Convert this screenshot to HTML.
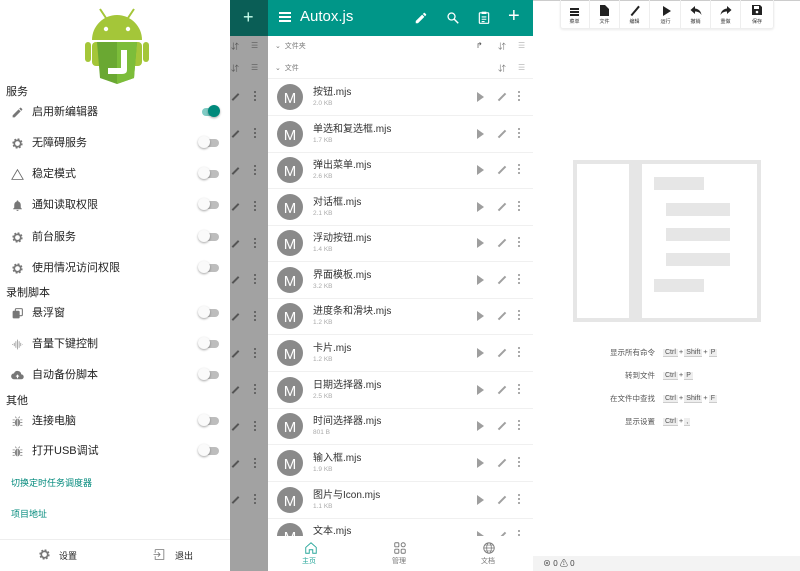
<!DOCTYPE html>
<html><head><meta charset="utf-8"><style>
*{margin:0;padding:0;box-sizing:border-box}
body{width:800px;height:571px;overflow:hidden;position:relative;background:#fff;font-family:"Liberation Sans","Noto Sans CJK SC",sans-serif;color:#222}
.a{position:absolute}
.dr{left:0;top:0;width:230px;height:571px;background:#fff}
.sec{position:absolute;left:6px;font-size:11px;color:#222}
.it{position:absolute;left:32px;font-size:11px;color:#222;line-height:14px}
.ic{position:absolute;left:11px;width:13px;height:13px}
.tg{position:absolute;left:198px;width:22px;height:10px}
.tg .tr{position:absolute;left:4px;top:1px;width:17px;height:8px;border-radius:4px;background:#bdbdbd}
.tg .th{position:absolute;left:0;top:-2px;width:12px;height:12px;border-radius:6px;background:#fafafa;box-shadow:0 1px 2px rgba(0,0,0,.35)}
.tg.on .tr{background:#80cbc4}
.tg.on .th{left:10px;background:#00897b}
.strip{left:230px;top:0;width:38px;height:571px;background:#a2a2a2}
.app{left:268px;top:0;width:265px;height:571px;background:#fff}
.hdr{left:268px;top:0;width:265px;height:36px;background:#009688}
.row{position:absolute;left:268px;width:265px;height:37px;border-bottom:1px solid #f0f0f0}
.av{position:absolute;left:9px;top:5px;width:26px;height:26px;border-radius:13px;background:#8a8a8a;color:#fff;font-family:"Liberation Sans",sans-serif;font-size:15px;text-align:center;line-height:29px}
.tt{position:absolute;left:45px;top:4px;font-size:10px;color:#333}
.sz{position:absolute;left:45px;top:21px;font-size:6.5px;color:#aaa}
.pl{position:absolute;left:209px;top:13px;width:0;height:0;border-left:7px solid #9e9e9e;border-top:5px solid transparent;border-bottom:5px solid transparent}
.pe{position:absolute;left:229px;top:17px;width:10px;height:2px;background:#a0a0a0;transform:rotate(-45deg)}
.dt{position:absolute;left:250px;top:12px;width:2px;height:2px;background:#aaa;box-shadow:0 4px 0 #aaa,0 8px 0 #aaa}
.spe{position:absolute;left:231px;width:9px;height:2px;background:#555;transform:rotate(-45deg)}
.sdt{position:absolute;left:254px;width:2px;height:2px;background:#666;box-shadow:0 4px 0 #666,0 8px 0 #666}
.ed{left:533px;top:0;width:267px;height:571px;background:#fff}
.tb{position:absolute;top:0;width:30px;height:29px;border-right:1px solid #eee;text-align:center}
.tb span{position:absolute;left:0;right:0;top:18px;font-size:5px;color:#333}
.gr{position:absolute;background:#e6e6e6}
.sc{position:absolute;font-size:7.5px;color:#555;white-space:nowrap}
.k{display:inline-block;background:#eee;border-bottom:1px solid #ccc;padding:0 2px;font-size:7px;margin:0 1px}
</style></head><body>

<div class="a dr">
 <svg class="a" style="left:84px;top:6px" width="66" height="78" viewBox="0 0 66 78">
  <line x1="16" y1="3" x2="22" y2="12" stroke="#a4c639" stroke-width="2"/>
  <line x1="50" y1="3" x2="44" y2="12" stroke="#a4c639" stroke-width="2"/>
  <path d="M8 34 A25 25 0 0 1 58 34 Z" fill="#a4c639"/>
  <circle cx="22" cy="23" r="2.2" fill="#fff"/><circle cx="44" cy="23" r="2.2" fill="#fff"/>
  <rect x="8" y="36" width="50" height="24" rx="4" fill="#a4c639"/>
  <rect x="1" y="36" width="6" height="20" rx="3" fill="#a4c639"/>
  <rect x="59" y="36" width="6" height="20" rx="3" fill="#a4c639"/>
  <path d="M13 36 H53 L50 72 L33 78 L16 72 Z" fill="#6aa832"/>
  <path d="M33 36 H53 L50 72 L33 78 Z" fill="#7cbd3a"/>
  <path d="M37 44 H43 V64 Q43 68 38 68 H24 V62 H37 Z" fill="#fff"/>
 </svg>
 <div class="sec" style="top:83px">服务</div>
 <svg class="ic" style="top:106px" viewBox="0 0 24 24"><path d="M3 17.2V21h3.8L17.8 10l-3.8-3.8zM20.7 7a1 1 0 000-1.4l-2.3-2.3a1 1 0 00-1.4 0l-1.8 1.8 3.8 3.8z" fill="#777"/></svg>
 <div class="it" style="top:105px">启用新编辑器</div><div class="tg on" style="top:107px"><div class="tr"></div><div class="th"></div></div>
 <svg class="ic" style="top:137px" viewBox="0 0 24 24"><circle cx="12" cy="12" r="7" fill="none" stroke="#777" stroke-width="5" stroke-dasharray="3 2.5"/><circle cx="12" cy="12" r="6" fill="none" stroke="#777" stroke-width="3"/></svg>
 <div class="it" style="top:136px">无障碍服务</div><div class="tg" style="top:138px"><div class="tr"></div><div class="th"></div></div>
 <svg class="ic" style="top:168px" viewBox="0 0 24 24"><path d="M12 3L1.5 21h21z" fill="none" stroke="#666" stroke-width="1.5"/></svg>
 <div class="it" style="top:167px">稳定模式</div><div class="tg" style="top:169px"><div class="tr"></div><div class="th"></div></div>
 <svg class="ic" style="top:199px" viewBox="0 0 24 24"><path d="M12 22a2 2 0 002-2h-4a2 2 0 002 2zm6-6V11c0-3-1.6-5.6-4.5-6.3V4a1.5 1.5 0 00-3 0v.7C7.6 5.4 6 8 6 11v5l-2 2v1h16v-1z" fill="#777"/></svg>
 <div class="it" style="top:198px">通知读取权限</div><div class="tg" style="top:200px"><div class="tr"></div><div class="th"></div></div>
 <svg class="ic" style="top:231px" viewBox="0 0 24 24"><circle cx="12" cy="12" r="7" fill="none" stroke="#777" stroke-width="5" stroke-dasharray="3 2.5"/><circle cx="12" cy="12" r="6" fill="none" stroke="#777" stroke-width="3"/></svg>
 <div class="it" style="top:230px">前台服务</div><div class="tg" style="top:232px"><div class="tr"></div><div class="th"></div></div>
 <svg class="ic" style="top:262px" viewBox="0 0 24 24"><circle cx="12" cy="12" r="7" fill="none" stroke="#777" stroke-width="5" stroke-dasharray="3 2.5"/><circle cx="12" cy="12" r="6" fill="none" stroke="#777" stroke-width="3"/></svg>
 <div class="it" style="top:261px">使用情况访问权限</div><div class="tg" style="top:263px"><div class="tr"></div><div class="th"></div></div>
 <div class="sec" style="top:284px">录制脚本</div>
 <svg class="ic" style="top:307px" viewBox="0 0 24 24"><rect x="3" y="7" width="13" height="14" rx="2" fill="#777"/><rect x="8" y="3" width="13" height="13" rx="2" fill="none" stroke="#777" stroke-width="2"/></svg>
 <div class="it" style="top:306px">悬浮窗</div><div class="tg" style="top:308px"><div class="tr"></div><div class="th"></div></div>
 <svg class="ic" style="top:338px" viewBox="0 0 24 24"><path d="M2 12h2M6 9v6M9 6v12M12 3v18M15 6v12M18 9v6M21 12h1" stroke="#999" stroke-width="1.5"/></svg>
 <div class="it" style="top:337px">音量下键控制</div><div class="tg" style="top:339px"><div class="tr"></div><div class="th"></div></div>
 <svg class="ic" style="top:369px" viewBox="0 0 24 24"><path d="M19 10a7 7 0 00-13.5-2A5.5 5.5 0 006 19h13a4.5 4.5 0 000-9z" fill="#777"/><path d="M12 10l-3.5 4H11v3h2v-3h2.5z" fill="#fff"/></svg>
 <div class="it" style="top:368px">自动备份脚本</div><div class="tg" style="top:370px"><div class="tr"></div><div class="th"></div></div>
 <div class="sec" style="top:392px">其他</div>
 <svg class="ic" style="top:415px" viewBox="0 0 24 24"><ellipse cx="12" cy="14" rx="5" ry="7" fill="#888"/><path d="M3 9h4M3 14h4M3 19h4M17 9h4M17 14h4M17 19h4M8 3l2 3M16 3l-2 3" stroke="#888" stroke-width="1.5"/><path d="M12 8v13" stroke="#fff"/></svg>
 <div class="it" style="top:414px">连接电脑</div><div class="tg" style="top:416px"><div class="tr"></div><div class="th"></div></div>
 <svg class="ic" style="top:445px" viewBox="0 0 24 24"><ellipse cx="12" cy="14" rx="5" ry="7" fill="#888"/><path d="M3 9h4M3 14h4M3 19h4M17 9h4M17 14h4M17 19h4M8 3l2 3M16 3l-2 3" stroke="#888" stroke-width="1.5"/><path d="M12 8v13" stroke="#fff"/></svg>
 <div class="it" style="top:444px">打开USB调试</div><div class="tg" style="top:446px"><div class="tr"></div><div class="th"></div></div>
 <div class="a" style="left:11px;top:476px;font-size:9px;color:#00897b">切换定时任务调度器</div>
 <div class="a" style="left:11px;top:507px;font-size:9px;color:#00897b">项目地址</div>
 <div class="a" style="left:0;top:539px;width:230px;height:1px;background:#eee"></div>
 <svg class="a" style="left:38px;top:548px" width="13" height="13" viewBox="0 0 24 24"><circle cx="12" cy="12" r="7" fill="none" stroke="#777" stroke-width="5" stroke-dasharray="3 2.5"/><circle cx="12" cy="12" r="6" fill="none" stroke="#777" stroke-width="3"/></svg>
 <div class="a" style="left:59px;top:549px;font-size:9px">设置</div>
 <svg class="a" style="left:153px;top:548px" width="13" height="13" viewBox="0 0 24 24"><path d="M4 3h16v18H4V15M4 9V3" fill="none" stroke="#777" stroke-width="1.5"/><path d="M1 12h12M9 8l4 4-4 4" fill="none" stroke="#777" stroke-width="1.5"/></svg>
 <div class="a" style="left:175px;top:549px;font-size:9px">退出</div>
</div>

<div class="a strip"></div>
<div class="a" style="left:230px;top:0;width:38px;height:36px;background:#0a5e56"></div>
<div class="a" style="left:243px;top:7px;color:#cfe;font-size:18px;font-weight:300">+</div>
<div class="a" style="left:231px;top:41px;font-size:8px;color:#555">⇵</div><div class="a" style="left:251px;top:41px;font-size:8px;color:#666">☰</div>
<div class="a" style="left:231px;top:63px;font-size:8px;color:#555">⇵</div><div class="a" style="left:251px;top:63px;font-size:8px;color:#666">☰</div>
<div class="spe" style="top:96px"></div><div class="sdt" style="top:91px"></div>
<div class="spe" style="top:133px"></div><div class="sdt" style="top:128px"></div>
<div class="spe" style="top:170px"></div><div class="sdt" style="top:165px"></div>
<div class="spe" style="top:206px"></div><div class="sdt" style="top:201px"></div>
<div class="spe" style="top:243px"></div><div class="sdt" style="top:238px"></div>
<div class="spe" style="top:279px"></div><div class="sdt" style="top:274px"></div>
<div class="spe" style="top:316px"></div><div class="sdt" style="top:311px"></div>
<div class="spe" style="top:353px"></div><div class="sdt" style="top:348px"></div>
<div class="spe" style="top:389px"></div><div class="sdt" style="top:384px"></div>
<div class="spe" style="top:426px"></div><div class="sdt" style="top:421px"></div>
<div class="spe" style="top:463px"></div><div class="sdt" style="top:458px"></div>
<div class="spe" style="top:499px"></div><div class="sdt" style="top:494px"></div>

<div class="a app"></div>
<div class="a hdr">
 <div class="a" style="left:11px;top:12px;width:12px;height:2px;background:#fff;box-shadow:0 4px 0 #fff,0 8px 0 #fff"></div>
 <div class="a" style="left:32px;top:8px;font-size:15px;color:#fff">Autox.js</div>
 <svg class="a" style="left:146px;top:11px" width="14" height="14" viewBox="0 0 24 24"><path d="M3 17.2V21h3.8L17.8 10l-3.8-3.8zM20.7 7a1 1 0 000-1.4l-2.3-2.3a1 1 0 00-1.4 0l-1.8 1.8 3.8 3.8z" fill="#fff"/></svg>
 <svg class="a" style="left:178px;top:11px" width="14" height="14" viewBox="0 0 24 24"><circle cx="9.5" cy="9.5" r="6" fill="none" stroke="#fff" stroke-width="2.2"/><path d="M14 14l7 7" stroke="#fff" stroke-width="2.5"/></svg>
 <svg class="a" style="left:209px;top:10px" width="14" height="15" viewBox="0 0 24 24"><rect x="4" y="4" width="16" height="18" rx="1" fill="none" stroke="#fff" stroke-width="2"/><rect x="8" y="2" width="8" height="4" fill="#fff"/><path d="M8 11h8M8 15h8M8 19h5" stroke="#fff" stroke-width="1.8"/></svg>
 <div class="a" style="left:240px;top:5px;font-size:20px;color:#fff;font-weight:300">+</div>
</div>
<div class="a" style="left:275px;top:41px;font-size:7px;color:#777">⌄ &nbsp;文件夹</div>
<div class="a" style="left:476px;top:41px;font-size:8px;color:#555">↱</div><div class="a" style="left:498px;top:41px;font-size:8px;color:#777">⇵</div><div class="a" style="left:518px;top:41px;font-size:8px;color:#bbb">☰</div>
<div class="a" style="left:275px;top:63px;font-size:7px;color:#777">⌄ &nbsp;文件</div>
<div class="a" style="left:498px;top:63px;font-size:8px;color:#777">⇵</div><div class="a" style="left:518px;top:63px;font-size:8px;color:#bbb">☰</div>
<div class="a" style="left:268px;top:78px;width:265px;height:1px;background:#f0f0f0"></div>

<div class="row" style="top:79px"><div class="av">M</div><div class="tt">按钮.mjs</div><div class="sz">2.0 KB</div><div class="pl"></div><div class="pe"></div><div class="dt"></div></div>
<div class="row" style="top:116px"><div class="av">M</div><div class="tt">单选和复选框.mjs</div><div class="sz">1.7 KB</div><div class="pl"></div><div class="pe"></div><div class="dt"></div></div>
<div class="row" style="top:152px"><div class="av">M</div><div class="tt">弹出菜单.mjs</div><div class="sz">2.6 KB</div><div class="pl"></div><div class="pe"></div><div class="dt"></div></div>
<div class="row" style="top:189px"><div class="av">M</div><div class="tt">对话框.mjs</div><div class="sz">2.1 KB</div><div class="pl"></div><div class="pe"></div><div class="dt"></div></div>
<div class="row" style="top:225px"><div class="av">M</div><div class="tt">浮动按钮.mjs</div><div class="sz">1.4 KB</div><div class="pl"></div><div class="pe"></div><div class="dt"></div></div>
<div class="row" style="top:262px"><div class="av">M</div><div class="tt">界面模板.mjs</div><div class="sz">3.2 KB</div><div class="pl"></div><div class="pe"></div><div class="dt"></div></div>
<div class="row" style="top:298px"><div class="av">M</div><div class="tt">进度条和滑块.mjs</div><div class="sz">1.2 KB</div><div class="pl"></div><div class="pe"></div><div class="dt"></div></div>
<div class="row" style="top:335px"><div class="av">M</div><div class="tt">卡片.mjs</div><div class="sz">1.2 KB</div><div class="pl"></div><div class="pe"></div><div class="dt"></div></div>
<div class="row" style="top:372px"><div class="av">M</div><div class="tt">日期选择器.mjs</div><div class="sz">2.5 KB</div><div class="pl"></div><div class="pe"></div><div class="dt"></div></div>
<div class="row" style="top:408px"><div class="av">M</div><div class="tt">时间选择器.mjs</div><div class="sz">801 B</div><div class="pl"></div><div class="pe"></div><div class="dt"></div></div>
<div class="row" style="top:445px"><div class="av">M</div><div class="tt">输入框.mjs</div><div class="sz">1.9 KB</div><div class="pl"></div><div class="pe"></div><div class="dt"></div></div>
<div class="row" style="top:482px"><div class="av">M</div><div class="tt">图片与Icon.mjs</div><div class="sz">1.1 KB</div><div class="pl"></div><div class="pe"></div><div class="dt"></div></div>
<div class="row" style="top:518px"><div class="av">M</div><div class="tt">文本.mjs</div><div class="pl"></div><div class="pe"></div><div class="dt"></div></div>

<div class="a" style="left:268px;top:536px;width:265px;height:35px;background:#fff"></div>
<svg class="a" style="left:304px;top:541px" width="14" height="14" viewBox="0 0 24 24"><path d="M3 11L12 3l9 8v10h-6v-6H9v6H3z" fill="none" stroke="#26a69a" stroke-width="1.6"/></svg>
<div class="a" style="left:302px;top:556px;font-size:7px;color:#26a69a">主页</div>
<svg class="a" style="left:393px;top:541px" width="14" height="14" viewBox="0 0 24 24"><rect x="3" y="3" width="7" height="7" rx="1.5" fill="none" stroke="#777" stroke-width="1.6"/><circle cx="17.5" cy="6.5" r="3.5" fill="none" stroke="#777" stroke-width="1.6"/><rect x="3" y="14" width="7" height="7" rx="1.5" fill="none" stroke="#777" stroke-width="1.6"/><rect x="14" y="14" width="7" height="7" rx="1.5" fill="none" stroke="#777" stroke-width="1.6"/></svg>
<div class="a" style="left:392px;top:556px;font-size:7px;color:#777">管理</div>
<svg class="a" style="left:482px;top:541px" width="14" height="14" viewBox="0 0 24 24"><circle cx="12" cy="12" r="9" fill="none" stroke="#777" stroke-width="1.5"/><ellipse cx="12" cy="12" rx="4" ry="9" fill="none" stroke="#777" stroke-width="1.3"/><path d="M3 12h18M5 7h14M5 17h14" stroke="#777" stroke-width="1.2"/></svg>
<div class="a" style="left:481px;top:556px;font-size:7px;color:#777">文档</div>

<div class="a ed">
 <div class="a" style="left:0;top:0;width:267px;height:1px;background:#ccc"></div>
 <div class="a" style="left:27px;top:0;width:214px;height:29px;border:1px solid #eee;border-top:none;border-radius:0 0 3px 3px;box-shadow:0 1px 2px rgba(0,0,0,.08)"></div>
 <div class="tb" style="left:27px"><div class="a" style="left:10px;top:8px;width:9px;height:1.5px;background:#222;box-shadow:0 3px 0 #222,0 6px 0 #222"></div><span>菜单</span></div>
 <div class="tb" style="left:57px"><svg class="a" style="left:10px;top:5px" width="9" height="11" viewBox="0 0 9 11"><path d="M0 0h5l4 4v7H0z" fill="#222"/></svg><span>文件</span></div>
 <div class="tb" style="left:87px"><div class="a" style="left:9px;top:10px;width:12px;height:1.5px;background:#222;transform:rotate(-50deg)"></div><span>编辑</span></div>
 <div class="tb" style="left:118px"><div class="a" style="left:12px;top:6px;border-left:8px solid #222;border-top:5px solid transparent;border-bottom:5px solid transparent"></div><span>运行</span></div>
 <div class="tb" style="left:148px"><svg class="a" style="left:9px;top:5px" width="12" height="11" viewBox="0 0 24 22"><path d="M10 2L1 10l9 8v-5c6 0 10 2 13 7-1-7-5-12-13-13z" fill="#222"/></svg><span>撤销</span></div>
 <div class="tb" style="left:178px"><svg class="a" style="left:9px;top:5px" width="12" height="11" viewBox="0 0 24 22"><path d="M14 2l9 8-9 8v-5C8 13 4 15 1 20c1-7 5-12 13-13z" fill="#222"/></svg><span>重做</span></div>
 <div class="tb" style="left:209px;border-right:none"><svg class="a" style="left:10px;top:5px" width="10" height="10" viewBox="0 0 10 10"><path d="M0 0h8l2 2v8H0z" fill="#222"/><rect x="2" y="1" width="5" height="3" fill="#fff"/><circle cx="5" cy="7" r="1.3" fill="#fff"/></svg><span>保存</span></div>

 <div class="gr" style="left:40px;top:160px;width:188px;height:162px"></div>
 <div class="a" style="left:44px;top:164px;width:52px;height:154px;background:#fff"></div>
 <div class="a" style="left:109px;top:164px;width:115px;height:154px;background:#fff"></div>
 <div class="gr" style="left:121px;top:177px;width:50px;height:13px"></div>
 <div class="gr" style="left:133px;top:203px;width:64px;height:13px"></div>
 <div class="gr" style="left:133px;top:228px;width:64px;height:13px"></div>
 <div class="gr" style="left:133px;top:253px;width:64px;height:13px"></div>
 <div class="gr" style="left:121px;top:279px;width:50px;height:13px"></div>

 <div class="sc" style="right:145px;top:347px">显示所有命令</div><div class="sc" style="left:129px;top:347px"><span class="k">Ctrl</span>+<span class="k">Shift</span>+<span class="k">P</span></div>
 <div class="sc" style="right:145px;top:370px">转到文件</div><div class="sc" style="left:129px;top:370px"><span class="k">Ctrl</span>+<span class="k">P</span></div>
 <div class="sc" style="right:145px;top:393px">在文件中查找</div><div class="sc" style="left:129px;top:393px"><span class="k">Ctrl</span>+<span class="k">Shift</span>+<span class="k">F</span></div>
 <div class="sc" style="right:145px;top:416px">显示设置</div><div class="sc" style="left:129px;top:416px"><span class="k">Ctrl</span>+<span class="k">,</span></div>

 <div class="a" style="left:0;top:556px;width:267px;height:15px;background:#f3f3f3"></div>
 <div class="a" style="left:10px;top:558px;font-size:8px;color:#444">⊗ 0 ⚠ 0</div>
</div>
</body></html>
